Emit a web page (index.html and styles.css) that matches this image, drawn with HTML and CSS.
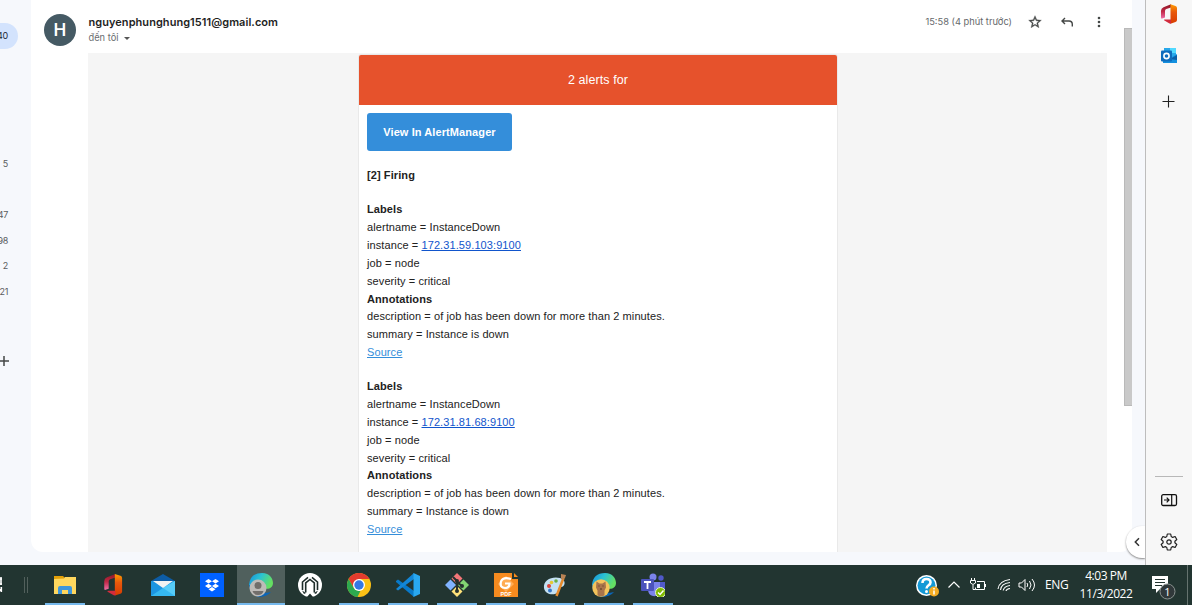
FILE: index.html
```html
<!DOCTYPE html>
<html lang="vi">
<head>
<meta charset="utf-8">
<title>Gmail</title>
<link rel="stylesheet" href="styles.css">
</head>
<body>
<div class="desktop">
  <div class="browser">
    <nav class="nav">
      <div class="nav-active">40</div>
      <div class="count c1">5</div>
      <div class="count c2">47</div>
      <div class="count">98</div>
      <div class="count">2</div>
      <div class="count">21</div>
      <svg class="nav-plus" width="12" height="12" viewBox="0 0 12 12"><path d="M6 1v10M1 6h10" stroke="#444746" stroke-width="1.5"/></svg>
    </nav>
    <main class="mail">
      <header class="mail-head">
        <div class="avatar">H</div>
        <div class="who">
          <div class="sender">nguyenphunghung1511@gmail.com</div>
          <div class="to"><span>đến tôi</span><i class="caret"></i></div>
        </div>
        <div class="time">15:58 (4 phút trước)</div>
        <div class="actions">
          <svg width="14" height="14" viewBox="1 1 22 22"><path fill="#444746" stroke="#444746" stroke-width=".5" d="M22 9.24l-7.19-.62L12 2 9.19 8.63 2 9.24l5.46 4.73L5.82 21 12 17.27 18.18 21l-1.63-7.03L22 9.24zM12 15.4l-3.76 2.27 1-4.28-3.32-2.88 4.38-.38L12 6.1l1.71 4.04 4.38.38-3.32 2.88 1 4.28L12 15.4z"/></svg>
          <svg width="14" height="14" viewBox="0 0 14 14"><path d="M5 3L2 6l3 3M2 6h7q3.300 0 3.300 3.300v2.200" fill="none" stroke="#444746" stroke-width="1.4"/></svg>
          <svg width="14" height="14" viewBox="0 0 14 14"><g fill="#444746"><circle cx="7" cy="3" r="1.300"/><circle cx="7" cy="7" r="1.300"/><circle cx="7" cy="11" r="1.300"/></g></svg>
        </div>
      </header>
      <div class="scroll-thumb"></div>
      <div class="mail-body">
        <article class="card">
          <h1 class="banner">2 alerts for</h1>
          <div class="content">
            <a class="button">View In AlertManager</a>
            <div class="block firing"><b>[2] Firing</b></div>
            <div class="block">
              <b>Labels</b>
              <span>alertname = InstanceDown</span>
              <span>instance = <a class="ip">172.31.59.103:9100</a></span>
              <span>job = node</span>
              <span>severity = critical</span>
              <b>Annotations</b>
              <span>description = of job has been down for more than 2 minutes.</span>
              <span>summary = Instance is down</span>
              <span><a class="source">Source</a></span>
            </div>
            <div class="block">
              <b>Labels</b>
              <span>alertname = InstanceDown</span>
              <span>instance = <a class="ip">172.31.81.68:9100</a></span>
              <span>job = node</span>
              <span>severity = critical</span>
              <b>Annotations</b>
              <span>description = of job has been down for more than 2 minutes.</span>
              <span>summary = Instance is down</span>
              <span><a class="source">Source</a></span>
            </div>
          </div>
        </article>
      </div>
    </main>
    <div class="gutter">
      <div class="expand"><svg width="8" height="10" viewBox="0 0 8 10"><path d="M6 1.300L2.300 5 6 8.700" fill="none" stroke="#333" stroke-width="1.500"/></svg></div>
    </div>
    <aside class="side">
      <svg class="s-office" width="18" height="20" viewBox="0 0 18 20"><use href="#office"/></svg>
      <svg class="s-outlook" width="18" height="18" viewBox="0 0 18 18"><path fill="#28a8ea" d="M4 1h12v9H4z"/><path fill="#50d9ff" d="M10 1h6v5h-6z"/><path fill="#1490df" d="M3 9l6 3 8-5v9H3z"/><path fill="#0a5ea8" d="M10 12l7-4v5z"/><rect x="1" y="3.500" width="11" height="11" rx="1" fill="#0f6cbd"/><circle cx="6.500" cy="9" r="2.600" fill="none" stroke="#fff" stroke-width="1.600"/></svg>
      <svg class="s-plus" width="14" height="14" viewBox="0 0 14 14"><path d="M6.500 1.500v12M.5 7.500h12" stroke="#222" stroke-width="1.100"/></svg>
      <div class="rule"></div>
      <svg class="s-panel" width="18" height="14" viewBox="0 0 18 14"><rect x="1.700" y="1.700" width="14.800" height="10.800" rx="1.500" fill="none" stroke="#111" stroke-width="1.300"/><path d="M11.700 2v10M4 7h5M6.700 4.700L9 7 6.700 9.300" fill="none" stroke="#111" stroke-width="1.200"/></svg>
      <svg class="s-gear" width="18" height="18" viewBox="0 0 18 18" fill="none" stroke="#222" stroke-width="1.200" stroke-linejoin="round"><path d="M7.300 1h3.400l.5 2.500 1.500.9 2.400-.9 1.700 3-1.900 1.700v1.600l1.900 1.700-1.700 3-2.400-.9-1.500.9-.5 2.500H7.300l-.5-2.500-1.500-.9-2.400.9-1.700-3 1.900-1.700V8.200L1.200 6.500l1.700-3 2.400.9 1.500-.9z"/><circle cx="9" cy="9" r="2.200"/></svg>
    </aside>
  </div>

  <footer class="taskbar">
    <div class="tb-left">
      <svg width="41" height="40" viewBox="0 0 41 40"><path d="M0 14h2M0 19h2M0 24v2M1 12v8M1.300 22v5" stroke="#fff" stroke-width="1.600" fill="none"/><path d="M24.500 12v16M27.500 12v16" stroke="#52605c"/></svg>
    </div>
    <div class="apps">
      <div class="app open"><svg viewBox="0 0 24 24"><path fill="#e3a008" d="M1 3h9l2 2v2H1z"/><path fill="#ffd75e" d="M1 6l10-.5L12 4h11v17H1z"/><path fill="#3e96dc" d="M5 21v-6q0-2 2-2h10q2 0 2 2v6h-4v-4H9v4z"/></svg></div>
      <div class="app"><svg viewBox="-1 -.5 21.500 21.500"><defs><linearGradient id="office-left" x2="0" y2="1"><stop stop-color="#8d1722"/><stop offset=".5" stop-color="#c22948"/><stop offset="1" stop-color="#ef6fa8"/></linearGradient><linearGradient id="office-right" x2="0" y2="1"><stop stop-color="#ff9d00"/><stop offset=".4" stop-color="#e8590c"/><stop offset="1" stop-color="#d83b01"/></linearGradient></defs><g id="office"><path fill="url(#office-left)" d="M11 .3L3.500 3.200Q1 4.200 1 6.800v6.500q0 1.600 1.200 1.300L5 13.500V7q0-1.500 1.300-2L11 3.500z"/><path fill="url(#office-right)" d="M10.500.3L15.500 1.900Q17 2.400 17 4v12q0 1.600-1.500 2.100l-5 1.600z"/><path fill="#d22b3d" d="M4 16.300q-.5-.8.800-.8H11v4.200l-1.500-.3z"/></g></svg></div>
      <div class="app"><svg viewBox="0 0 24 24"><path fill="#0d5ca5" d="M0 8L12 1l12 7v2H0z"/><path fill="#1c95e2" d="M0 8h24v15H0z"/><path fill="#35b8f1" d="M0 23L12 15l12-7v15z"/><path fill="#56ccf8" d="M24 8v15L12 15z"/><path fill="#f2f2f2" d="M2 8h20L12 15z"/></svg></div>
      <div class="app"><svg viewBox="0 0 24 24"><path fill="#0061ff" d="M0 0h24v24H0z"/><path fill="#fff" d="M8.500 6L12 8.300 8.500 10.600 5 8.300zM15.500 6L19 8.300l-3.500 2.300L12 8.300zM8.500 10.700L12 13l-3.500 2.300L5 13zM15.500 10.700L19 13l-3.500 2.300L12 13zM12 14l3.500 2.200L12 18.500l-3.500-2.300z"/></svg></div>
      <div class="app open active"><svg viewBox="0 0 24 24"><defs><linearGradient id="edge" x2="1" y2=".4"><stop stop-color="#168edb"/><stop offset=".5" stop-color="#2bc3d2"/><stop offset="1" stop-color="#65df62"/></linearGradient></defs><path fill="#0b65b7" d="M2 8q2 15 20 11-4 5-13 5Q0 19 0 11z"/><path fill="url(#edge)" d="M0 12Q1 0 13 0c8 0 11 6 11 10 0 5-5 7-10 5z"/><circle cx="9" cy="15" r="8.500" fill="#bdbbb8"/><circle cx="9" cy="12.500" r="3.500" fill="#716e6b"/><path fill="#716e6b" d="M3.500 18h11q-1 4-5.500 4t-5.500-4z"/></svg></div>
      <div class="app"><svg viewBox="0 0 24 24"><circle cx="12" cy="12" r="12" fill="#fff"/><path d="M4.500 17V9L10 4.300M19.500 17V9L14 4.300M7.700 19.500V10L12 6.500l4.300 3.500v9.500" fill="none" stroke="#1d2c29" stroke-width="1.600"/><path fill="#1d2c29" d="M9 24l3-3.500 3 3.500zM4 17.500l4 2.500-2 1zM20 17.500L16 20l2 1z"/></svg></div>
      <div class="app open"><svg viewBox="0 0 24 24"><circle cx="12" cy="12" r="12" fill="#fbc116"/><path fill="#e33b2e" d="M1.600 6A12 12 0 0 1 22.400 6H12L6.800 15z"/><path fill="#2da94f" d="M1.600 6l5.200 9 5.200 3 1.500-.2L10.500 24A12 12 0 0 1 1.600 6z"/><circle cx="12" cy="12" r="6" fill="#fff"/><circle cx="12" cy="12" r="4.700" fill="#3578e5"/></svg></div>
      <div class="app open"><svg viewBox="0 0 24 24"><path fill="#0879c9" d="M0 8l2-1.500L18 18v6L0 9z"/><path fill="#1386d6" d="M0 16l2 1.500L18 6V0z"/><path fill="#29a8f0" d="M17.500 0L24 3v18l-6.500 3z"/></svg></div>
      <div class="app open"><svg viewBox="0 0 24 24"><path fill="#f47678" d="M12 0l5.500 5.500L12 11 6.500 5.500z"/><path fill="#80b3ff" d="M5.500 6.500L11 12l-5.500 5.500L0 12z"/><path fill="#82d573" d="M18.500 6.500L24 12l-5.500 5.500L13 12z"/><path fill="#ffe27a" d="M12 13l5.500 5.500L12 24l-5.500-5.500z"/><path d="M8 4l4 4v10M12 9l5 4" stroke="#26312f" stroke-width="2" fill="none"/><g fill="#26312f"><circle cx="12" cy="8" r="2"/><circle cx="12" cy="18" r="2"/><circle cx="17" cy="13" r="2"/></g></svg></div>
      <div class="app open"><svg viewBox="0 0 24 24"><path fill="#f68b1f" d="M0 0h18v6h6v18H0zM20 0l4 4h-4z"/><path fill="#ffad55" d="M12 3l8 8-8 8-8-8z"/><path d="M17 6q-8-2.500-10 2.500-1.500 6.500 4 6.500 4.500 0 4.500-4.500H11" fill="none" stroke="#fff" stroke-width="2.200"/><text x="12" y="22.500" class="pdf">PDF</text></svg></div>
      <div class="app open"><svg viewBox="0 0 24 24"><path fill="#c4e1f3" d="M1 15C0 7 9 3 17 5c7 2 5 9 1 9-3 0-2 3-3 5-3 4-13 3-14-4z"/><g><circle cx="6" cy="13" r="2" fill="#d9433c"/><circle cx="8.500" cy="9.500" r="1.800" fill="#e5ca32"/><circle cx="13" cy="8" r="1.800" fill="#6bae42"/><circle cx="7" cy="17.500" r="2" fill="#3677c8"/></g><path d="M13.500 23l7-18" stroke="#e78b2c" stroke-width="2.500"/><path fill="#b88355" d="M18 5V1l5 1-1 3-3 2z"/></svg></div>
      <div class="app open"><svg viewBox="0 0 24 24"><path fill="#0b65b7" d="M2 8q2 15 20 11-4 5-13 5Q0 19 0 11z"/><path fill="url(#edge)" d="M0 12Q1 0 13 0c8 0 11 6 11 10 0 5-5 7-10 5z"/><circle cx="9" cy="15" r="8.700" fill="#f4c45c"/><path fill="#a8744b" d="M4.500 8.500l3 2h3l3-2 .5 6-1.500 3v5q-3.500 1.500-7 0v-5L4 14.500z"/><path d="M6.500 13h1M10.500 13h1M8 16h2" stroke="#573920"/></svg></div>
      <div class="app open"><svg viewBox="0 0 24 24"><circle cx="12" cy="4" r="3.500" fill="#7b83eb"/><circle cx="20" cy="5" r="2.700" fill="#5059c9"/><path fill="#5059c9" d="M15 9h9v8q-1 4-6 4z"/><path fill="#7b83eb" d="M7 9h12v9q-2 6-7 5-5-1-5-7z"/><rect y="6" width="13" height="12" rx="1" fill="#4b53bc"/><path d="M3 9h7M6.500 9v7" stroke="#fff" stroke-width="1.800"/><circle cx="19.500" cy="19.500" r="5" fill="#7fba00" stroke="#e6f4cc"/><path d="M17 19.500l2 2 3.500-4" fill="none" stroke="#fff" stroke-width="1.500"/></svg></div>
    </div>
    <div class="tray">
      <svg class="help" width="24" height="24" viewBox="0 0 24 24"><circle cx="10.500" cy="10.500" r="10.500" fill="#fff"/><circle cx="10.500" cy="10.500" r="9" fill="#1499d6"/><path d="M6.500 8q0-4 4-4t4 3.500c0 3-4 2.500-4 6" fill="none" stroke="#fff" stroke-width="2.600"/><circle cx="10.500" cy="16.500" r="1.500" fill="#fff"/><circle cx="18" cy="16.500" r="5" fill="#f4ac23"/><path d="M18 13v1.500M18 15.500v4" stroke="#fff" stroke-width="1.500"/></svg>
      <svg class="chev" width="14" height="12" viewBox="0 0 14 12"><path d="M1.500 8.500L7 3l5.500 5.500" fill="none" stroke="#fff" stroke-width="1.200"/></svg>
      <svg class="batt" width="17" height="14" viewBox="0 0 17 14" fill="none" stroke="#fff"><path d="M7 3.500h7.500v8h-9v-2M15.500 6v3M.5 2.500h5v2.500q-2.500 3-5 0zM1.500 0v2.500M4.500 0v2.500M3 7v4.500h2.500"/><path fill="#fff" stroke="none" d="M7 6h3v4H7z"/></svg>
      <svg class="wifi" width="14" height="14" viewBox="0 0 14 14" fill="none" stroke="#fff" stroke-width="1.100"><path d="M1 11Q2 3 13 1.500M3.500 12Q4 5.500 13 4.500M6.200 12.500Q7 8.300 13 7.500M9 13q.5-2.200 4-2.500"/></svg>
      <svg class="vol" width="18" height="14" viewBox="0 0 18 14" fill="none" stroke="#fff"><path d="M1 5h2.500L7 1.500v11L3.500 9H1zM9 5q1.500 2 0 4M11.500 3q3 4 0 8M14 1q5 6 0 12"/></svg>
      <span class="lang">ENG</span>
      <div class="clock"><span>4:03 PM</span><span>11/3/2022</span></div>
      <svg class="notif" width="26" height="28" viewBox="0 0 26 28"><path fill="#fff" d="M1 3h16v13H9l-4 4v-4H1z"/><path d="M4 6.500h10M4 9.500h10M4 12.500h7" stroke="#22332f"/><circle cx="16.500" cy="18.500" r="7.500" fill="#30383a" stroke="#8a9290"/><text x="16.500" y="22.700" class="badge">1</text></svg>
      <i class="peek"></i>
    </div>
  </footer>
</div>
</body>
</html>
```
FILE: styles.css
```css
* { box-sizing: border-box; }
body { margin: 0; overflow: hidden; font-family: "Liberation Sans", Arial, sans-serif; }
svg { display: block; flex: none; }
.desktop { width: 1192px; height: 605px; display: flex; flex-direction: column; }
.browser { height: 565px; display: flex; background: #f6f8fc; }

.nav { width: 31px; overflow: hidden; display: flex; flex-direction: column; font: 9px/12px Inter, sans-serif; color: #5a5c5e; }
.nav-active { width: 38px; height: 26px; margin: 23px 0 0 -20px; padding-right: 10px; border-radius: 13px; background: #d3e3fd; color: #1f2937; line-height: 25px; text-align: right; letter-spacing: -.3px; }
.count { width: 28px; margin: 0 0 13.500px -20px; text-align: right; letter-spacing: -.3px; }
.c1 { margin-top: 109px; margin-bottom: 39px; }
.nav-plus { margin: 44px 0 0 -2px; }

.mail { width: 1101px; height: 552px; display: grid; grid-template: 53px 1fr / 1fr 9px; background: #fff; border-radius: 0 0 12px 12px; overflow: hidden; }
.mail-head { display: flex; align-items: flex-start; padding: 14px 0 0 13px; }
.avatar { width: 32px; height: 32px; border-radius: 50%; background: #455a64; color: #fff; font: 500 18px/32px Roboto, sans-serif; text-align: center; }
.who { margin-left: 12.500px; white-space: nowrap; font-family: Inter, sans-serif; }
.sender { font: 600 11px/16px Inter, sans-serif; color: #1f1f1f; letter-spacing: .05px; }
.to { display: flex; align-items: center; gap: 5px; font-size: 9.300px; line-height: 16px; color: #6a6d70; }
.caret { border: 3px solid transparent; border-top-color: #555; border-bottom: 0; }
.time { margin-left: auto; font: 9.300px/16px Inter, sans-serif; color: #65686b; white-space: nowrap; }
.actions { display: flex; gap: 18px; margin: 1px 17px 0 16px; }
.scroll-thumb { grid-column: 2; grid-row: 1 / 3; width: 8px; height: 378px; margin-top: 28px; justify-self: end; background: #c9c9c9; border: 1px solid #b9b9b9; border-right: 0; }
.mail-body { grid-column: 1; grid-row: 2; margin: 0 16px 0 57px; background: #f5f5f5; overflow: hidden; padding: 1px 0 0 270px; }
.card { width: 480px; height: 520px; border: 1px solid #e9e9e9; border-radius: 3px; background: #fff; overflow: hidden; }
.banner { height: 50px; margin: 0; background: #e6522c; color: #fff; font-weight: 400; font-size: 12.500px; line-height: 50px; letter-spacing: .08px; text-align: center; }
.content { padding: 8px; font-size: 11px; line-height: 17.850px; letter-spacing: .09px; color: #222; }
.button { display: block; width: 145px; height: 38px; border-radius: 3px; background: #348eda; color: #fff; font-weight: 700; line-height: 38px; text-align: center; white-space: nowrap; }
.block { display: flex; flex-direction: column; margin-top: 16.300px; white-space: nowrap; }
.firing { margin-top: 16.150px; }
.ip { color: #15c; text-decoration: underline; }
.source { color: #348eda; text-decoration: underline; }

.gutter { width: 13px; position: relative; overflow: visible; }
.expand { position: absolute; right: 0; top: 526px; width: 19px; height: 32px; padding: 11px 0 0 7px; border-radius: 16px 0 0 16px; background: #fff; box-shadow: 0 1px 2px #888; clip-path: inset(-4px 0 -4px -4px); }
.side { width: 47px; border-left: 1px solid #bdbdbd; background: #f7f7f7; display: flex; flex-direction: column; align-items: center; }
.s-office { margin-top: 4px; }
.s-outlook { margin-top: 23px; }
.s-plus { margin-top: 29px; }
.rule { width: 28px; height: 1px; margin-top: 368px; background: #b8b8b8; }
.s-panel { margin-top: 16px; }
.s-gear { margin-top: 26px; }

.taskbar { height: 40px; display: flex; background: #223531; color: #fff; }
.tb-left { width: 41px; }
.apps { display: flex; gap: 1px; }
.app { width: 48px; height: 40px; padding: 8px 12px 0; }
.app svg { width: 24px; height: 24px; }
.open { background: linear-gradient(#76b9ed, #76b9ed) center bottom / 40px 2px no-repeat; }
.active { background: linear-gradient(#76b9ed, #76b9ed) center bottom / 48px 2px no-repeat #50605d; }
.pdf { font: 700 5.500px "Liberation Sans", sans-serif; fill: #fff; text-anchor: middle; }
.tray { flex: 1; display: flex; align-items: center; justify-content: flex-end; }
.help { margin: 3px 7px 0 0; }
.chev { margin-right: 9px; }
.batt { margin-right: 10px; }
.wifi { margin-right: 7px; }
.vol { margin-right: 9px; }
.lang { width: 23px; font: 12px/16px "Open Sans", sans-serif; letter-spacing: -.3px; white-space: nowrap; }
.clock { width: 60px; margin: 0 15px 0 8px; display: flex; flex-direction: column; font: 12px/18px "Open Sans", sans-serif; letter-spacing: -.45px; text-align: center; white-space: nowrap; }
.notif { margin-top: 4px; }
.badge { font: 11px "Open Sans", sans-serif; fill: #fff; text-anchor: middle; }
.peek { width: 1px; height: 40px; margin: 0 4px 0 10px; background: #65736f; }
```
